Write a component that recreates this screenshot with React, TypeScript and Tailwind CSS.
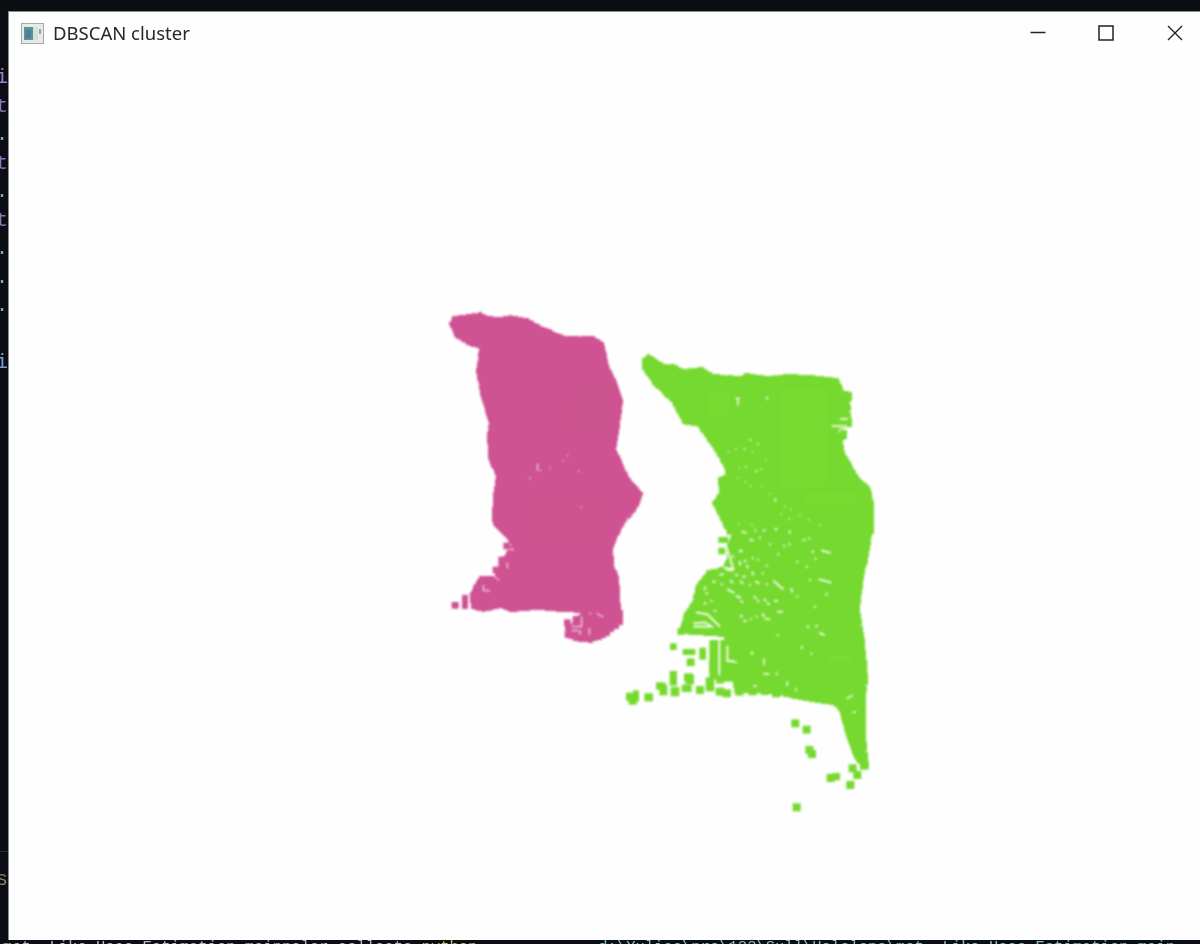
const PINK = "#cf5293";
const GREEN = "#76d92f";

const PINK_BODY =
  "450,323 453,317 470,315 480,313 485,316 497,318 510,316 527,319 543,328 565,337 593,337 602,343 607,365 615,382 621,400 617,433 614,448 627,477 641,493 638,502 632,512 623,522 615,538 611,548 612,565 617,577 619,610 620,622 612,612 563,610 537,608 510,610 500,606 483,610 472,607 470,595 475,585 480,577 495,577 500,565 507,552 512,545 507,537 495,525 493,520 494,493 497,477 489,457 488,433 490,423 482,397 477,372 480,347 467,343 455,335";

const PINK_FEET = "582,612 620,612 620,622 607,633 590,640 575,638 567,634 567,628 578,622";

const GREEN_BODY =
  "643,359 648,355 653,358 663,365 673,365 683,370 702,368 712,375 740,377 745,374 768,377 787,375 810,376 837,379 842,391 850,393 850,399 848,400 850,425 832,427 840,430 845,431 845,437 840,438 843,452 857,477 868,487 872,502 872,532 870,532 867,555 862,575 858,608 863,642 866,680 864,693 864,737 867,765 863,767 855,757 847,735 840,710 833,703 810,700 790,696 777,693 767,692 735,688 733,680 728,658 725,635 680,632 685,613 693,602 697,585 707,572 723,567 728,558 727,547 732,535 728,533 713,502 720,492 719,478 727,475 725,467 717,452 698,425 683,422 673,402 655,385 643,368";

// Small squares along an outline, the cloud's edge is made of points
function edgePoints(points: string, step = 3) {
  const pts = points.split(" ").map((p) => p.split(",").map(Number));
  const out: [number, number][] = [];
  pts.forEach(([x, y], i) => {
    const [nx, ny] = pts[(i + 1) % pts.length];
    const n = Math.max(1, Math.round(Math.hypot(nx - x, ny - y) / step));
    for (let k = 0; k < n; k++) {
      out.push([Math.round(x + ((nx - x) * k) / n), Math.round(y + ((ny - y) * k) / n)]);
    }
  });
  return out;
}

// Scattered squares, in the 3x coordinates of the lower green crop
const GREEN_DOTS: [number, number, number, number][] = [
  [30, 110, 20, 20], [48, 108, 14, 30], [38, 125, 20, 14], [86, 112, 22, 20], [130, 90, 20, 28],
  [122, 78, 24, 18], [160, 55, 18, 40], [165, 95, 22, 24], [200, 85, 26, 18], [205, 52, 22, 20],
  [212, 8, 20, 16], [240, 90, 20, 20], [270, 73, 22, 38], [278, 20, 18, 30], [300, 58, 20, 20],
  [300, 95, 22, 20], [320, 100, 22, 20], [358, 95, 20, 20], [398, 95, 20, 18], [435, 95, 20, 16],
  [468, 100, 20, 20], [526, 190, 20, 20], [560, 209, 20, 20], [568, 270, 20, 20], [576, 282, 20, 20],
  [632, 354, 20, 20], [648, 350, 20, 18], [691, 375, 20, 20], [698, 325, 20, 20], [712, 345, 20, 20],
  [733, 317, 22, 20], [530, 442, 20, 20],
];

// White gaps in the green cloud, same idea, upper crop: x, y, length, angle
const GREEN_GAPS: [number, number, number, number][] = [
  [222, 22, 14, 10], [256, 16, 6, 90], [283, 16, 6, 90], [318, 13, 8, 0], [360, 20, 6, 90], [245, 45, 12, 25],
  [270, 38, 6, 90], [300, 58, 6, 0], [342, 62, 6, 90], [358, 58, 6, 0], [402, 45, 8, -20], [418, 40, 6, 0],
  [468, 80, 30, 15], [428, 80, 8, 0], [437, 102, 6, 0], [382, 110, 6, 0], [410, 125, 6, 90], [325, 88, 6, 0],
  [212, 78, 12, -10], [188, 95, 8, 90], [225, 108, 8, 0], [248, 100, 6, 90], [265, 105, 6, 0], [290, 122, 6, 0],
  [210, 115, 14, 80], [232, 125, 10, 70], [155, 148, 14, -15], [180, 135, 22, 0], [200, 150, 8, 0], [222, 155, 10, 0],
  [248, 145, 12, 80], [278, 145, 6, 0], [185, 170, 12, 40], [215, 172, 12, 40], [240, 180, 6, 0], [262, 172, 14, 30],
  [290, 178, 6, 0], [325, 180, 40, 40], [365, 196, 14, 80], [382, 214, 6, 90], [420, 165, 6, 0], [465, 168, 40, 15],
  [470, 208, 8, 90], [110, 205, 8, 0], [132, 170, 10, 0], [155, 178, 6, 0], [182, 198, 24, 30], [205, 216, 16, 20],
  [215, 230, 10, 20], [255, 218, 10, 30], [265, 228, 8, 40], [285, 225, 10, 20], [295, 236, 10, 15], [318, 228, 12, 0],
  [330, 260, 18, 0], [435, 245, 6, 0], [214, 274, 10, 0], [225, 288, 10, 0], [243, 282, 6, 0], [260, 275, 6, 0],
  [280, 270, 12, 45], [292, 282, 18, 10], [414, 305, 8, 90], [440, 303, 8, 90], [456, 327, 18, 25], [323, 330, 6, 0],
  [395, 368, 8, 90], [424, 386, 6, 0], [432, 408, 8, 60], [246, 384, 10, 90], [283, 412, 22, 90], [290, 447, 18, 0],
  [322, 432, 6, 90], [352, 474, 8, 90], [105, 235, 8, 0], [135, 258, 8, 0], [105, 190, 10, 90], [125, 228, 6, 0],
];

// Lines of white that cut the lower-left fringe of the green cloud
const GREEN_CUTS = [
  "M78 262 L112 268 L150 305",
  "M70 295 L105 292 L125 305 L70 305",
  "M55 332 L130 340",
  "M172 362 V408 H205",
  "M148 350 V445",
  "M160 128 L190 132 L168 60",
];

const GREEN_FRINGE: [number, number, number, number][] = [
  [145, 36, 30, 18], [145, 68, 20, 20], [110, 135, 24, 20], [80, 178, 22, 20], [65, 232, 24, 18],
  [44, 262, 24, 20], [22, 310, 20, 20], [0, 355, 20, 20], [38, 372, 38, 18], [52, 400, 20, 20],
  [88, 368, 20, 36], [46, 448, 26, 30], [110, 460, 20, 20], [140, 455, 20, 20],
  [118, 345, 28, 118], [150, 345, 40, 125], [0, 440, 20, 36],
];

const SIDE_GLYPHS = [
  { c: "i", color: "text-[#9a80c8]" },
  { c: "t", color: "text-[#8f78b8]" },
  { c: ".", color: "text-[#8fa6bd]" },
  { c: "t", color: "text-[#8f78b8]" },
  { c: ".", color: "text-[#8fa6bd]" },
  { c: "t", color: "text-[#8f78b8]" },
  { c: ".", color: "text-[#8fa6bd]" },
  { c: ".", color: "text-[#8fa6bd]" },
  { c: ".", color: "text-[#8fa6bd]" },
  { c: " ", color: "" },
  { c: "i", color: "text-[#7d9ad8]" },
];

function WindowIcon() {
  return (
    <svg width="23" height="21" viewBox="0 0 23 21" className="blur-[0.6px]">
      <rect x="0.5" y="0.5" width="22" height="20" fill="#e8eaea" stroke="#a8a8a8" />
      <rect x="3" y="4" width="9" height="13" fill="#4f9a90" />
      <rect x="5" y="7" width="5" height="8" fill="#55789c" />
      <rect x="12" y="4" width="5" height="13" fill="#d4e0da" />
      <rect x="18" y="6" width="2" height="5" fill="#8aa89e" />
    </svg>
  );
}

function PinkCloud() {
  return (
    <g fill={PINK}>
      <polygon points={PINK_BODY} />
      <polygon points={PINK_FEET} />
      {edgePoints(PINK_BODY).map(([x, y], i) => (
        <rect key={i} x={x - 1} y={y - 1} width="3" height="3" />
      ))}
      {edgePoints(PINK_FEET, 5).map(([x, y], i) => (
        <rect key={i} x={x - 2} y={y - 2} width="5" height="5" />
      ))}
      <rect x="563" y="385" width="48" height="48" fill="#cc5591" />
      <rect x="520" y="490" width="88" height="60" fill="#cd5491" />
      <g transform="translate(430 470) scale(0.3333)">
        <rect x="65" y="396" width="21" height="20" />
        <rect x="96" y="375" width="18" height="42" />
        <rect x="220" y="218" width="20" height="20" />
        <rect x="205" y="260" width="24" height="30" />
        <rect x="188" y="290" width="24" height="20" />
        <rect x="150" y="320" width="50" height="30" />
        <rect x="130" y="345" width="40" height="40" />
        <rect x="402" y="448" width="20" height="20" />
        <rect x="404" y="484" width="20" height="20" />
        <rect x="428" y="438" width="22" height="20" />
      </g>
      <g transform="translate(430 470) scale(0.3333)" stroke="#fff" strokeWidth="3" fill="none">
        <path d="M238 238 H252" />
        <path d="M232 278 V295" />
        <path d="M192 318 L208 332" />
        <path d="M160 345 V362 H180" />
        <path d="M118 370 V412" />
        <path d="M425 470 H455 V440" />
        <path d="M450 480 V495 M478 475 V495 M425 482 H445" />
        <path d="M478 430 H484 M500 430 L520 442" />
        <path d="M300 22 V28 M452 112 H456" />
      </g>
      <g transform="translate(430 300) scale(0.3333)" stroke="#fff" strokeWidth="3" fill="none">
        <path d="M323 490 V512 M332 510 V514 M358 505 H362 M398 482 H402 M412 464 V468 M444 514 H448" />
      </g>
    </g>
  );
}

function GreenCloud() {
  return (
    <g fill={GREEN}>
      <polygon points={GREEN_BODY} />
      {edgePoints(GREEN_BODY).map(([x, y], i) => (
        <rect key={i} x={x - 1} y={y - 1} width="3" height="3" />
      ))}
      <rect x="780" y="388" width="47" height="98" fill="#78db30" />
      <rect x="708" y="390" width="22" height="24" fill="#78db30" />
      <rect x="805" y="492" width="50" height="14" fill="#78db30" />
      <rect x="828" y="655" width="24" height="24" fill="#79dc32" />
      <g transform="translate(630 345) scale(0.3333)" stroke="#fff" strokeWidth="4" fill="none">
        <path d="M316 160 H330 M324 160 V182 M411 154 V164" />
        <path d="M605 243 H650 M630 222 H655 M628 255 V262" />
        <path d="M358 285 H364 M384 294 V300 M294 322 H298 M316 312 H320 M344 308 V314 M366 322 H370 M406 344 H410 M326 370 H330 M348 362 V368 M376 380 L382 376 M390 372 H394 M322 398 H326 M348 408 V412 M362 422 V426 M394 424 H398 M418 446 H422 M436 460 V470 M464 482 V486 M480 494 H484 M452 508 H456 M478 520 V524 M508 510 H512 M534 524 H538 M570 538 V542" />
        <path d="M326 536 V540 M366 538 V542 M402 555 V560 M436 552 H440 M478 562 V566" />
      </g>
      <g transform="translate(670 525) scale(0.3333)">
        {GREEN_FRINGE.map(([x, y, w, h], i) => (
          <rect key={i} x={x} y={y} width={w} height={h} />
        ))}
        {GREEN_GAPS.map(([x, y, len, angle], i) => (
          <rect
            key={i}
            x={x - len / 2}
            y={y - 2.5}
            width={len}
            height={5}
            fill="#fff"
            transform={`rotate(${angle} ${x} ${y})`}
          />
        ))}
        {GREEN_CUTS.map((d) => (
          <path key={d} d={d} stroke="#fff" strokeWidth="5" fill="none" />
        ))}
      </g>
      <g transform="translate(620 660) scale(0.3333)">
        {GREEN_DOTS.map(([cx, cy, w, h], i) => (
          <rect key={i} x={cx - w / 2 - 2} y={cy - h / 2 - 2} width={w + 4} height={h + 4} />
        ))}
        <path d="M343 0 H742 V60 H735 V100 H343 Z" />
      </g>
      <g transform="translate(620 660) scale(0.3333)" stroke="#fff" strokeWidth="4" fill="none">
        <path d="M320 2 L352 8 M432 0 V16 M430 42 H448 M470 36 V46 M502 64 V78 M400 78 H410 M528 84 V94 M680 116 L698 106 M698 158 L708 154" />
      </g>
    </g>
  );
}

export default function App() {
  return (
    <div className="flex h-[944px] w-[1200px] flex-col overflow-hidden bg-[#0b0e14]">
      <div className="h-[11px] shrink-0 bg-[#0a0d12]" />
      <div className="flex h-[929px] shrink-0">
        {/* Terminal behind the window, only a sliver is visible */}
        <div className="flex w-[8px] shrink-0 flex-col overflow-hidden pt-[53px] font-['Liberation_Mono',monospace] text-[20px] blur-[0.5px]">
          {SIDE_GLYPHS.map((g, i) => (
            <div key={i} className={`flex h-[28.5px] shrink-0 items-center justify-end leading-none ${g.color}`}>
              {g.c}
            </div>
          ))}
          <div className="mt-[473px] h-px shrink-0 bg-[#2a2d33]" />
          <div className="mt-[14px] flex h-[28.5px] shrink-0 items-center justify-end leading-none text-[#8a7f68]">
            s
          </div>
        </div>

        <div className="flex min-w-0 flex-1 flex-col border-t border-l border-[#8d8d8d] bg-[#fefefe]">
          <div className="flex h-[42px] shrink-0 items-center pl-[12px]">
            <WindowIcon />
            <span className="ml-[9px] font-['Noto_Sans',sans-serif] text-[18.5px] leading-none text-[#26262e] blur-[0.4px]">
              DBSCAN cluster
            </span>
            <div className="ml-auto flex items-center pr-[17px] blur-[0.3px]">
              <svg width="16" height="16" viewBox="0 0 16 16" className="mr-[52px]">
                <path d="M0.5 7.5 H15.5" stroke="#222" strokeWidth="1.5" />
              </svg>
              <svg width="16" height="16" viewBox="0 0 16 16" className="mr-[53px]">
                <rect x="1" y="1" width="14" height="14" fill="none" stroke="#222" strokeWidth="1.5" />
              </svg>
              <svg width="16" height="16" viewBox="0 0 16 16">
                <path d="M1 1 L15 15 M15 1 L1 15" stroke="#222" strokeWidth="1.4" />
              </svg>
            </div>
          </div>
          <svg viewBox="9 54 1191 886" className="w-full flex-1 blur-[1px]">
            <PinkCloud />
            <GreenCloud />
          </svg>
        </div>
      </div>
      {/* Bottom edge of the terminal prompt, clipped to the tops of the letters */}
      <div className="flex h-[4px] shrink-0 overflow-hidden whitespace-pre pl-[3px] font-['Liberation_Mono',monospace] text-[15.5px] leading-[14px] blur-[0.5px]">
        <span className="text-[#b8bcc0]">mot. Like Hoco Estimation mainpolar collects </span>
        <span className="text-[#d8b870]">python</span>
        <span className="text-[#86c0c0]">             d:\Yuliao\pro\123\Sull\Hololens\mot  Like Hoco Estimation main</span>
      </div>
    </div>
  );
}
